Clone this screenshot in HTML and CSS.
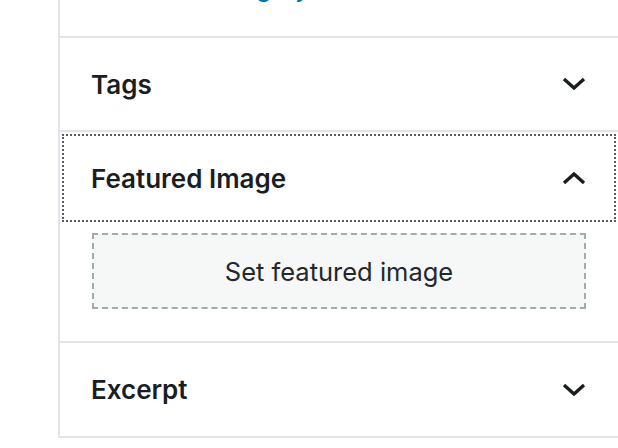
FILE: index.html
```html
<!DOCTYPE html>
<html lang="en">
<head>
    <meta charset="UTF-8">
    <meta name="viewport" content="width=device-width, initial-scale=1.0">
    <title>Document Settings</title>
    <link rel="stylesheet" href="styles.css">
</head>
<body>
    <div class="sidebar">
        <div class="panel panel-categories">
            <a href="#" class="add-link">Add New Category</a>
        </div>

        <div class="panel">
            <button class="panel-toggle">
                <span>Tags</span>
                <svg class="chevron" viewBox="0 0 24 14" width="24" height="14"><polyline points="2,2 12,11 22,2"/></svg>
            </button>
        </div>

        <div class="panel is-open">
            <button class="panel-toggle is-focused">
                <span>Featured Image</span>
                <svg class="chevron" viewBox="0 0 24 14" width="24" height="14"><polyline points="2,12 12,3 22,12"/></svg>
            </button>
            <div class="panel-body">
                <button class="featured-toggle">Set featured image</button>
            </div>
        </div>

        <div class="panel">
            <button class="panel-toggle">
                <span>Excerpt</span>
                <svg class="chevron" viewBox="0 0 24 14" width="24" height="14"><polyline points="2,2 12,11 22,2"/></svg>
            </button>
        </div>
    </div>
</body>
</html>
```

FILE: styles.css
```css
body {
    margin: 0;
    padding: 0;
    background-color: #fff;
    font-family: Inter, "Noto Sans", sans-serif;
    color: #191e23;
    overflow: hidden;
}
.sidebar {
    margin-left: 58px;
    border-left: 2px solid #e2e4e7;
    min-height: 448px;
}
.panel {
    border-bottom: 2px solid #e2e4e7;
}
.panel-categories {
    margin-top: -27px;
    padding: 0 32px 31px;
}
.add-link {
    display: block;
    font-size: 24px;
    font-weight: 500;
    line-height: 32px;
    color: #0073aa;
    text-decoration: none;
}
.panel-toggle {
    display: flex;
    align-items: center;
    justify-content: space-between;
    width: 100%;
    height: 92px;
    padding: 0 32px 0 31px;
    border: none;
    background: none;
    font-family: inherit;
    font-size: 26px;
    font-weight: 600;
    color: #191e23;
    text-align: left;
    cursor: pointer;
}
.panel:last-child .panel-toggle {
    height: 93px;
}
.panel-toggle.is-focused {
    outline: 2px dotted #555d66;
    outline-offset: -4px;
}
.chevron {
    fill: none;
    stroke: #191e23;
    stroke-width: 3.4;
}
.panel-body {
    padding: 9px 32px 32px;
}
.featured-toggle {
    display: block;
    width: 100%;
    height: 76px;
    border: 2px dashed #a2aab2;
    background-color: #f6f7f7;
    font-family: inherit;
    font-size: 25.5px;
    color: #23282d;
    cursor: pointer;
}
```
